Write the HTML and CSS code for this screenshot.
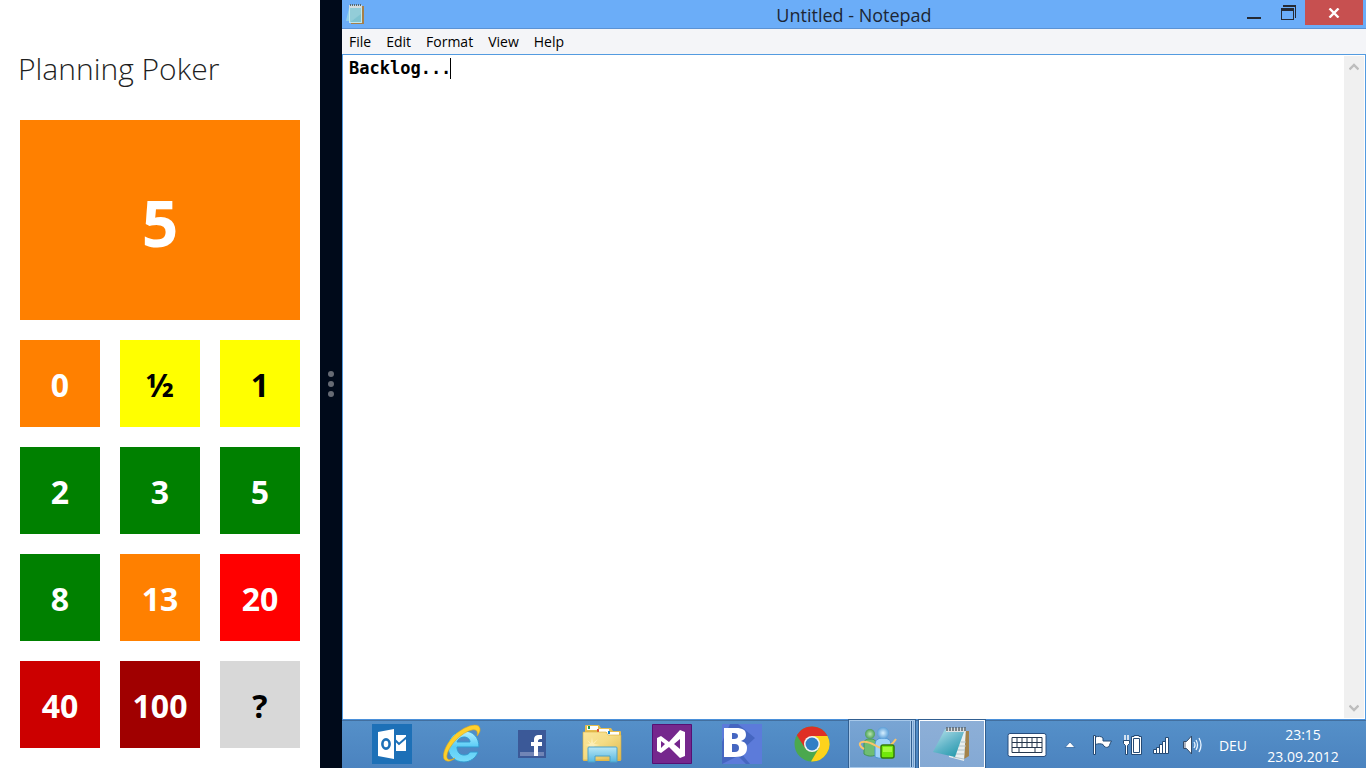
FILE: index.html
```html
<!DOCTYPE html>
<html lang="en">
<head>
<meta charset="utf-8">
<meta name="viewport" content="width=device-width, initial-scale=1">
<title>Planning Poker</title>
<link rel="stylesheet" href="styles.css">
</head>
<body>
<div class="screen">
  <main class="poker">
    <h1 class="poker-title">Planning Poker</h1>
    <output class="chosen">5</output>
    <div class="cards">
      <button class="card orange">0</button>
      <button class="card yellow">½</button>
      <button class="card yellow">1</button>
      <button class="card green">2</button>
      <button class="card green">3</button>
      <button class="card green">5</button>
      <button class="card green">8</button>
      <button class="card orange">13</button>
      <button class="card red">20</button>
      <button class="card crimson">40</button>
      <button class="card maroon">100</button>
      <button class="card gray">?</button>
    </div>
  </main>

  <div class="splitter" role="separator" aria-orientation="vertical">
    <span class="dot"></span><span class="dot"></span><span class="dot"></span>
  </div>

  <div class="desktop">
    <section class="window">
      <header class="titlebar">
        <svg class="app-icon" width="20" height="20" viewBox="0 0 20 20" aria-hidden="true">
          <path d="M3 4 0 17h4z" fill="#8fd0ec"/>
          <path d="M16 2h2v18H5v-1h11z" fill="#a5804a"/>
          <path d="M3 1h13v18H3z" fill="#c4e8ec"/>
          <path d="M4 4h11v7L4 18z" fill="#93cdd8"/>
          <path d="M4 18 15 10v8z" fill="#7fc3d0"/>
          <path d="M3 1h13v3H3z" fill="#d4dcde"/>
          <path d="M4.500 0v2M6.500 0v2M8.500 0v2M10.500 0v2M12.500 0v2M14.500 0v2" stroke="#59686e"/>
        </svg>
        <h2 class="window-title">Untitled - Notepad</h2>
        <div class="window-controls">
          <button class="control" aria-label="Minimize">
            <svg width="16" height="18" viewBox="0 0 16 18"><path d="M1 13h14v2H1z" fill="#252a33"/></svg>
          </button>
          <button class="control" aria-label="Restore">
            <svg width="16" height="18" viewBox="0 0 16 18"><path d="M3 1h13v13h-1V3H3z" fill="#252a33"/><path d="M1 4h13v12H1zM2 7v8h11V7z" fill="#252a33" fill-rule="evenodd"/></svg>
          </button>
          <button class="control close" aria-label="Close">
            <svg width="12" height="10" viewBox="0 0 12 10"><path d="M1.500.500l9 9M10.500.500l-9 9" stroke="#fff" stroke-width="2.400"/></svg>
          </button>
        </div>
      </header>
      <nav class="menubar" aria-label="Notepad menu">
        <button class="menu">File</button>
        <button class="menu">Edit</button>
        <button class="menu">Format</button>
        <button class="menu">View</button>
        <button class="menu">Help</button>
      </nav>
      <div class="editor">
        <textarea class="text" aria-label="Text editor" spellcheck="false">Backlog...</textarea>
        <span class="caret"></span>
        <div class="scrollbar">
          <button class="scroll-button" aria-label="Scroll up"><svg width="10" height="8" viewBox="0 0 10 8"><path d="M.500 6.500 5 2l4.500 4.500" fill="none" stroke="#bdbdbd" stroke-width="2.400"/></svg></button>
          <button class="scroll-button" aria-label="Scroll down"><svg width="10" height="8" viewBox="0 0 10 8"><path d="M.500 1.500 5 6l4.500-4.500" fill="none" stroke="#bdbdbd" stroke-width="2.400"/></svg></button>
        </div>
      </div>
    </section>

    <footer class="taskbar">
      <div class="pinned">
        <button class="pin" aria-label="Outlook">
          <svg width="40" height="40" viewBox="0 0 40 40"><path fill="#1d70b7" d="M0 0h40v40H0z"/><path fill="#fff" d="M6 8l16-3v30L6 32zM24 11h10v16H24z"/><path d="M23 16l4 4 8-7" fill="none" stroke="#1d70b7" stroke-width="2"/><ellipse cx="14" cy="20" rx="3.600" ry="4.600" fill="none" stroke="#1d70b7" stroke-width="2.600"/></svg>
        </button>
        <button class="pin" aria-label="Internet Explorer">
          <svg width="40" height="40" viewBox="0 0 40 40">
            <defs><linearGradient id="ie" x2="0" y2="1"><stop stop-color="#b3f0ff"/><stop offset=".5" stop-color="#5bcdf6"/><stop offset="1" stop-color="#79dcfa"/></linearGradient></defs>
            <path d="M37 23H15c0 5 3 8 7 8 3 0 5-1 6-3h8c-2 6-8 10-14 10C13 38 6 32 6 23S13 7 22 7s15 6 15 16zM15 18h13c0-3-3-5-6-5s-6 2-7 5z" fill="url(#ie)" fill-rule="evenodd" stroke="#3299cf"/>
            <path d="M2 35C-1 27 10 9 25 3c7-3 14-3 13 4-1 3-3 5-3 5 1-4 0-7-5-6C20 8 7 21 5 31c-1 5 3 6 8 3-4 4-9 4-11 1z" fill="#ffd02b" stroke="#d7a422" stroke-width=".600"/>
          </svg>
        </button>
        <button class="pin" aria-label="Facebook">
          <svg width="28" height="28" viewBox="0 0 28 28"><path fill="#3b5998" d="M0 0h28v28H0z"/><path fill="#7185b6" d="M2 22h24v4H2z"/><path fill="#fff" d="M16 26V16h-3v-4h3v-2c0-4 2-5 5-5h3v4h-2c-1 0-2 1-2 2v1h4v4h-4v10z"/></svg>
        </button>
        <button class="pin" aria-label="File Explorer">
          <svg width="40" height="40" viewBox="0 0 40 40">
            <defs><linearGradient id="fo" x2="1" y2="1"><stop stop-color="#fbe69b"/><stop offset=".45" stop-color="#f4dc85"/><stop offset="1" stop-color="#e0b84c"/></linearGradient><linearGradient id="fs" x2="0" y2="1"><stop stop-color="#b9e8f6"/><stop offset="1" stop-color="#57b6e0"/></linearGradient></defs>
            <path d="M3 5V2q0-1 1-1h13l2 3h10l2 3h7q1 0 1 1v28q0 1-1 1H2q-1 0-1-1V9h2z" fill="#e6bd4e"/>
            <path d="M5 2h11v4H5zM15 5h12v3H15zM25 8h12v3H25z" fill="#fff"/>
            <path d="M6 2h2v3H6z" fill="#219852"/><path d="M15 5h2v3h-2z" fill="#e04d31"/>
            <path d="M1 8h23l2 3h13v25H1z" fill="url(#fo)" stroke="#d9ae3e" stroke-width=".600"/>
            <path d="M26 7h2v3h-2z" fill="#1784c7"/>
            <path d="M3 21l5-1-3-4 4 3 1-6 1 6 5-4-4 5 6 1-6 1 4 5-5-4-1 7-1-7-4 4 3-5z" fill="#fff4c7" opacity=".7"/>
            <path d="M6 38V24q0-1 1-1h27q1 0 1 1v14h-7v-6H13v6z" fill="url(#fs)" stroke="#4da2c8"/>
          </svg>
        </button>
        <button class="pin" aria-label="Visual Studio">
          <svg width="40" height="40" viewBox="0 0 40 40"><path fill="#75278d" stroke="#561073" d="M.500.500h39v39H.500z"/><path d="M5 14l4-2 8 6L28 6l5 2v24l-5 2-11-11-8 6-4-2zm4 3v7l4-4zm19-2-6 5 6 5z" fill="#fff" fill-rule="evenodd"/></svg>
        </button>
        <button class="pin" aria-label="Blend">
          <svg width="40" height="40" viewBox="0 0 40 40"><path fill="#4566c1" d="M0 0h40v40H0z"/><path fill="#5c7bda" d="M16 0h24v40H28L18 28l15-14zM0 40l16-8 8 8zM0 0h8L0 18z"/><path d="M2 4h12c7 0 10 2 10 7 0 3-2 5-5 6 4 1 6 3 6 7 0 6-4 9-12 9H2zm8 5v6h2q4 0 4-3t-4-3zm0 11v8h3q4 0 4-4t-4-4z" fill="#fff" fill-rule="evenodd"/></svg>
        </button>
        <button class="pin" aria-label="Chrome">
          <svg width="36" height="36" viewBox="0 0 36 36"><circle cx="18" cy="18" r="17.500" fill="#4ba84e"/><path d="M18 18 2.800 9.300A17.500 17.500 0 0 1 33.500 10H18z" fill="#df2f25"/><path d="M18 10h15.500A17.500 17.500 0 0 1 17 35.500L25 22z" fill="#fdd31c"/><path d="M2.800 9.300 11 22l7-12z" fill="#df2f25"/><circle cx="18" cy="18" r="8" fill="#f4f5f3"/><circle cx="18" cy="18" r="6.500" fill="#317fc5"/></svg>
        </button>
      </div>
      <button class="running grouped" aria-label="Messenger">
        <svg width="40" height="36" viewBox="0 0 40 36">
          <defs><radialGradient id="mg"><stop stop-color="#b9e8b1"/><stop offset="1" stop-color="#4c9f57"/></radialGradient><radialGradient id="mb"><stop stop-color="#d7f0ff"/><stop offset="1" stop-color="#5b9fd8"/></radialGradient></defs>
          <path d="M6 28V18C6 14 8 13 12 13C16 13 18 14 18 18V29C13 31 9 30 6 28Z" fill="#6fbd72" stroke="#429650"/>
          <circle cx="12" cy="8" r="5" fill="url(#mg)"/>
          <path d="M17 31V19C17 14 20 12 25 12C30 12 33 14 33 19V31C28 33 22 33 17 31Z" fill="#a0d3f8" stroke="#4c94d4"/>
          <circle cx="25" cy="7" r="6" fill="url(#mb)"/>
          <path d="M6 23C2 21 0 17 4 16C11 14 17 20 23 22C30 22 35 18 38 13" fill="none" stroke="#f9c46b" stroke-width="2"/>
          <rect x="23" y="19" width="13" height="13" rx="2" fill="#71e80b" stroke="#347b09" stroke-width="1.500"/><path d="M25 21h9v5h-9z" fill="#a3fa3c"/>
        </svg>
      </button>
      <button class="running active" aria-label="Notepad">
        <svg width="38" height="36" viewBox="0 0 38 36">
          <defs><linearGradient id="np" x2=".7" y2="1"><stop stop-color="#bde6ec"/><stop offset=".6" stop-color="#5eb3c7"/><stop offset="1" stop-color="#299bad"/></linearGradient></defs>
          <path d="M32 5h4v25l-5 3z" fill="#a3834b"/><path d="M13 2h20l-2 33-15-4z" fill="#e9eff0"/><path d="M20 31l11 2M20 28h11M23 24h9M26 20h7M28 16h5" stroke="#b4c3c7"/>
          <path d="M12 3h20L22 31 0 26z" fill="url(#np)"/><path d="M13 2h20v4H13z" fill="#dae0e2"/><path d="M14 1v4M17 1v4M20 1v4M23 1v4M26 1v4M29 1v4M32 1v4" stroke="#59646b" stroke-width="1.500"/>
        </svg>
      </button>

      <div class="tray">
        <button class="tray-item wide" aria-label="Touch keyboard">
          <svg width="40" height="24" viewBox="0 0 40 24"><rect x="1" y=".500" width="38" height="23" rx="2" fill="#fff" stroke="#264c7d"/><path d="M5 4.500h30v15H5zM5 9.500h30M5 14.500h30M10 4v10M15 4v10M20 4v10M25 4v10M30 4v10M12 15v4M28 15v4" fill="none" stroke="#24364d"/></svg>
        </button>
        <button class="tray-item arrow" aria-label="Show hidden icons">
          <svg width="12" height="8" viewBox="0 0 12 8"><path d="M6 1l5 5.500H1z" fill="#fff" stroke="#3568a2" stroke-width=".800"/></svg>
        </button>
        <button class="tray-item" aria-label="Action Center">
          <svg width="20" height="20" viewBox="0 0 20 20"><path d="M.500 .500h2V19.500h-2zM2.500 2C5 1 8 1 10 3V6H18.500C17 8 17 10 15.500 12C13 13 11 12 10 9.500C8 8.500 5 8.500 2.500 9.500Z" fill="#fff" stroke="#244a75"/></svg>
        </button>
        <button class="tray-item" aria-label="Battery">
          <svg width="20" height="20" viewBox="0 0 20 20"><path d="M2 0v5M5 0v5" stroke="#fff" stroke-width="1.500"/><path d="M.500 5.500h6v3l-2 2v9h-2v-9l-2-2zM11 1.500V.500h5v1h2.500v18h-10v-18z" fill="#fff" stroke="#244a75"/><path d="M10.500 3.500h6v14h-6z" fill="#fff" stroke="#244a75"/></svg>
        </button>
        <button class="tray-item" aria-label="Network">
          <svg width="20" height="20" viewBox="0 0 20 20"><path d="M.500 14.500h3v4h-3zM3.500 12.500h3v6h-3zM6.500 9.500h3v9h-3zM9.500 6.500h3v12h-3zM12.500 2.500h3v16h-3z" fill="#fff" stroke="#244a75"/></svg>
        </button>
        <button class="tray-item" aria-label="Volume">
          <svg width="20" height="20" viewBox="0 0 20 20"><path d="M.500 6.500h3l5-5.500v18l-5-5.500h-3z" fill="#fff" stroke="#344b68"/><path d="M2 7v6" stroke="#aeb4bf" stroke-width="2"/><path d="M11 7q2 3 0 6M13 5q3 5 0 10M16 3q4 7 0 14" fill="none" stroke="#e9f4ff" stroke-width="1.300"/></svg>
        </button>
        <button class="tray-item wide">DEU</button>
        <button class="tray-item clock"><time datetime="2012-09-23T23:15">23:15<br>23.09.2012</time></button>
      </div>
    </footer>
  </div>
</div>
</body>
</html>
```
FILE: styles.css
```css
* { box-sizing: border-box; }

body {
  margin: 0;
  font-family: "Open Sans", "Noto Sans", sans-serif;
}

button {
  margin: 0;
  padding: 0;
  border: 0;
  background: none;
  color: inherit;
  font: inherit;
}

svg { display: block; }

.screen {
  display: flex;
  min-height: 100vh;
}

/* Planning Poker, snapped to the left */
.poker {
  display: flex;
  flex-direction: column;
  flex: 0 0 320px;
  padding: 48px 20px 20px;
  background: #fff;
}

.poker-title {
  margin: 0 -2px 30px;
  color: #1f1f1f;
  font-size: 30px;
  font-weight: 300;
  line-height: 42px;
}

.chosen {
  display: flex;
  align-items: center;
  justify-content: center;
  height: 200px;
  margin-bottom: 20px;
  padding-top: 6px;
  background: #ff8000;
  color: #fff;
  font-size: 64px;
  font-weight: 700;
  line-height: 80px;
}

.cards {
  display: grid;
  flex: 1;
  grid-template-columns: repeat(3, 1fr);
  grid-auto-rows: 1fr;
  gap: 20px;
}

.card {
  padding-top: 2px;
  color: #fff;
  font-size: 32px;
  font-weight: 700;
  line-height: 40px;
}

.orange { background: #ff8000; }
.yellow { background: #ff0; color: #000; }
.green { background: #008000; }
.red { background: #f00; }
.crimson { background: #c00; }
.maroon { background: #a00000; }
.gray { background: #d8d8d8; color: #000; }

.splitter {
  display: flex;
  flex: 0 0 22px;
  flex-direction: column;
  align-items: center;
  justify-content: center;
  gap: 4px;
  background: #000a1a;
}

.dot {
  width: 6px;
  height: 6px;
  border-radius: 50%;
  background: #666b74;
}

/* Desktop with the Notepad window */
.desktop {
  display: flex;
  flex: 1;
  flex-direction: column;
  min-width: 0;
}

.window {
  display: flex;
  flex: 1;
  flex-direction: column;
}

.titlebar {
  display: grid;
  grid-template-columns: 120px 1fr 120px;
  height: 29px;
  border-bottom: 1px solid #5b92d4;
  background: #6badf8;
}

.app-icon { margin: 4px; }

.window-title {
  margin: 0;
  color: #1c2635;
  font-size: 18px;
  font-weight: 400;
  line-height: 30px;
  text-align: center;
}

.window-controls {
  display: flex;
  align-items: flex-start;
  justify-content: flex-end;
  padding-right: 3px;
}

.control {
  display: flex;
  flex: 0 0 34px;
  align-items: center;
  justify-content: center;
  height: 25px;
}

.close {
  flex-basis: 58px;
  background: #c75050;
}

.menubar {
  display: flex;
  gap: 15px;
  height: 26px;
  padding-left: 7px;
  border-bottom: 1px solid #539be0;
  background: #f4f5f8;
  color: #000;
  font-size: 14px;
  line-height: 25px;
}

.editor {
  position: relative;
  display: flex;
  flex: 1;
  border-right: 1px solid #539be0;
  border-left: 1px solid #539be0;
  background: #fff;
}

.text {
  flex: 1;
  padding: 3px 6px;
  border: 0;
  outline: 0;
  background: #fff;
  color: #000;
  font-family: "DejaVu Sans Mono", monospace;
  font-size: 17px;
  font-weight: 700;
  line-height: 20px;
  resize: none;
}

.caret {
  position: absolute;
  top: 3px;
  left: 107px;
  width: 1px;
  height: 21px;
  background: #000;
}

.scrollbar {
  display: flex;
  flex: 0 0 20px;
  flex-direction: column;
  justify-content: space-between;
  margin: 1px 1px 1px 0;
  background: #f0f0f0;
}

.scroll-button {
  display: flex;
  align-items: center;
  justify-content: center;
  height: 21px;
}

.taskbar {
  display: flex;
  height: 49px;
  border-top: 1px solid #4a90da;
  background: linear-gradient(#5590c9, #4b83bf);
  box-shadow: inset 0 1px #426f9f;
  color: #fff;
}

.pinned {
  display: flex;
  padding: 0 2px 0 15px;
}

.pin {
  display: flex;
  flex: 0 0 70px;
  align-items: center;
  justify-content: center;
}

.running {
  display: flex;
  align-items: center;
  justify-content: center;
  flex: 0 0 66px;
  border: 1px solid #a7c8e9;
  outline: 1px solid #315f91;
  outline-offset: 0;
  background: linear-gradient(#79a5d4, #6b9acb);
}

.grouped {
  margin-right: 4px;
  padding-right: 8px;
  background: linear-gradient(to right, transparent 60px, #a7c8e9 60px 61px, #315f91 61px 62px, #a7c8e9 62px 63px, transparent 63px), linear-gradient(#79a5d4, #6b9acb);
}

.active {
  border-color: #fff;
  background: linear-gradient(#8dafd7, #84a9d4);
}

.tray {
  display: flex;
  gap: 10px;
  margin-left: auto;
  padding-right: 23px;
  font-size: 14px;
}

.tray-item {
  display: flex;
  flex: 0 0 20px;
  align-items: center;
  justify-content: center;
  padding-top: 2px;
}

.arrow { flex-basis: 26px; }
.wide { flex-basis: 40px; }

.clock {
  flex-basis: 80px;
  padding-top: 4px;
  line-height: 22px;
}
```
